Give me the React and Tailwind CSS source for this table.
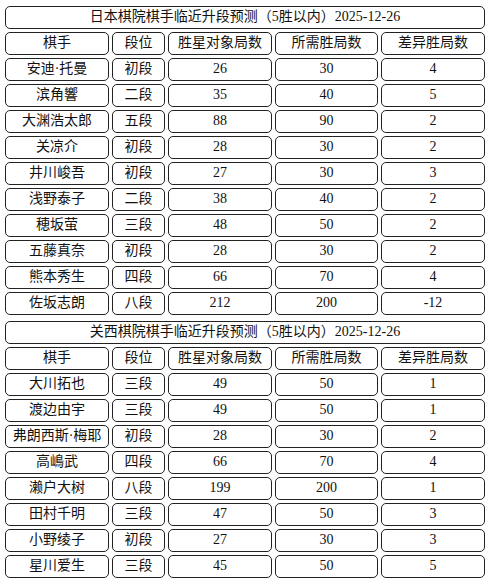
import React from 'react';

const japan = [
  ['安迪·托曼', '初段', '26', '30', '4'],
  ['滨角響', '二段', '35', '40', '5'],
  ['大渊浩太郎', '五段', '88', '90', '2'],
  ['关凉介', '初段', '28', '30', '2'],
  ['井川峻吾', '初段', '27', '30', '3'],
  ['浅野泰子', '二段', '38', '40', '2'],
  ['穂坂萤', '三段', '48', '50', '2'],
  ['五藤真奈', '初段', '28', '30', '2'],
  ['熊本秀生', '四段', '66', '70', '4'],
  ['佐坂志朗', '八段', '212', '200', '-12'],
];

const kansai = [
  ['大川拓也', '三段', '49', '50', '1'],
  ['渡边由宇', '三段', '49', '50', '1'],
  ['弗朗西斯·梅耶', '初段', '28', '30', '2'],
  ['高嶋武', '四段', '66', '70', '4'],
  ['濑户大树', '八段', '199', '200', '1'],
  ['田村千明', '三段', '47', '50', '3'],
  ['小野绫子', '初段', '27', '30', '3'],
  ['星川爱生', '三段', '45', '50', '5'],
];

const headers = ['棋手', '段位', '胜星对象局数', '所需胜局数', '差异胜局数'];

const cell =
  'flex items-center justify-center h-[23px] border border-[#222] rounded-[5px] whitespace-nowrap leading-none';

const RankTable = ({ title, rows }) => (
  <div className="grid grid-cols-[104px_53px_104px_103px_104px] gap-[3px] p-[3px]">
    <div className={`${cell} col-span-5`}>{title}</div>
    {headers.map((h) => (
      <div key={h} className={cell}>{h}</div>
    ))}
    {rows.map((r, i) =>
      r.map((v, j) => (
        <div key={`${i}-${j}`} className={cell}>{v}</div>
      ))
    )}
  </div>
);

export default function App() {
  return (
    <div
      className="w-[489px] h-[588px] bg-white text-[#111] text-[14px] pl-[2px] pt-[2.5px]"
      style={{ fontFamily: '"Liberation Serif", "Noto Sans CJK SC", serif' }}
    >
      <RankTable title="日本棋院棋手临近升段预测（5胜以内）2025-12-26" rows={japan} />
      <RankTable title="关西棋院棋手临近升段预测（5胜以内）2025-12-26" rows={kansai} />
    </div>
  );
}
